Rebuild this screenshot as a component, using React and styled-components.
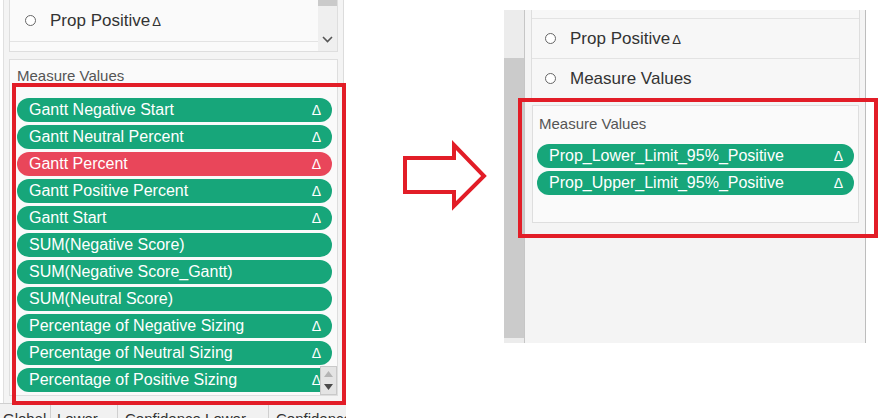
import React from "react";
import styled, { createGlobalStyle } from "styled-components";

const Global = createGlobalStyle`
  html, body { margin: 0; padding: 0; background: #fff; }
  body { width: 880px; height: 418px; overflow: hidden; font-family: "Liberation Sans", Arial, sans-serif; }
`;

const Stage = styled.div`
  display: flex;
  width: 880px;
  height: 418px;
  overflow: hidden;
  background: #fff;
`;

/* ---------- left screenshot ---------- */
const LeftShot = styled.div`
  position: relative;
  flex: none;
  width: 346px;
  height: 418px;
  display: flex;
  flex-direction: column;
  background: #fff;
`;

const LeftPanel = styled.div`
  flex: none;
  height: 403px;
  width: 329px;
  margin-left: 3px;
  padding: 0 5px;
  border-left: 1px solid #e0e0e0;
  border-right: 1px solid #dcdcdc;
  background: #f4f4f4;
  display: flex;
  flex-direction: column;
  gap: 7px;
`;

const ListBox = styled.div`
  height: 51px;
  display: flex;
  border: 1px solid #dedede;
  border-top: none;
  background: #fafafa;
`;

const ListRows = styled.div`
  flex: 1;
  display: flex;
  flex-direction: column;
`;

const Row = styled.div`
  flex: none;
  height: ${(p) => p.$h}px;
  display: flex;
  align-items: center;
  gap: 14px;
  padding-left: ${(p) => p.$indent}px;
  border-bottom: 1px solid #e3e3e3;
  font-size: 17px;
  color: #333;
  box-sizing: border-box;
`;

const Radio = styled.span`
  flex: none;
  width: 9px;
  height: 9px;
  border: 1px solid #666;
  border-radius: 50%;
  background: #fff;
`;

const SmallDelta = styled.span`
  font-size: 13px;
  margin-left: 2px;
`;

const VScroll = styled.div`
  flex: none;
  width: 19px;
  background: #efefef;
  display: flex;
  flex-direction: column;
  align-items: center;
`;

const Thumb = styled.div`
  width: 19px;
  height: 6px;
  background: #cacaca;
`;

const Chevron = styled.svg`
  margin-top: 30px;
`;

const Shelf = styled.div`
  flex: none;
  height: ${(p) => p.$h}px;
  box-sizing: border-box;
  border: 1px solid #dedede;
  background: #fafafa;
  padding-top: ${(p) => p.$pt}px;
  display: flex;
  flex-direction: column;
`;

const ShelfLabel = styled.div`
  height: 18px;
  line-height: 18px;
  font-size: 15px;
  color: #555;
  padding-left: ${(p) => p.$pl}px;
`;

const PillList = styled.div`
  position: relative;
  flex: 1;
  overflow: hidden;
  margin-top: ${(p) => p.$mt}px;
  padding-left: ${(p) => p.$pl}px;
  display: flex;
  flex-direction: column;
  gap: 3px;
`;

const Pill = styled.div`
  flex: none;
  width: ${(p) => p.$w}px;
  height: 24px;
  box-sizing: border-box;
  border-radius: 12px;
  padding: 0 11px 0 12px;
  display: flex;
  align-items: center;
  justify-content: space-between;
  background: ${(p) => (p.$red ? "#e9465a" : "#17a67a")};
  color: #fff;
  font-size: 16px;
  white-space: nowrap;
`;

const Delta = styled.span`
  font-size: 14px;
`;

const MiniScroll = styled.div`
  position: absolute;
  left: 310px;
  top: 268px;
  width: 15px;
  height: 27px;
  background: #e4e4e4;
  border: 1px solid #c9c9c9;
  display: flex;
  flex-direction: column;
  align-items: center;
  justify-content: space-around;
`;

const TabBar = styled.div`
  flex: none;
  height: 15px;
  display: flex;
  border-top: 1px solid #cfcfcf;
  background: #f1f1f1;
  overflow: hidden;
`;

const Tab = styled.div`
  flex: none;
  width: ${(p) => p.$w}px;
  border-right: 1px solid #cfcfcf;
  padding: 6px 0 0 ${(p) => p.$pl}px;
  box-sizing: border-box;
  font-size: 15px;
  line-height: 18px;
  color: #333;
  white-space: nowrap;
  overflow: hidden;
`;

const RedFrame = styled.div`
  position: absolute;
  left: ${(p) => p.$x}px;
  top: ${(p) => p.$y}px;
  width: ${(p) => p.$w}px;
  height: ${(p) => p.$h}px;
  box-sizing: border-box;
  border: 4px solid #e21d27;
  pointer-events: none;
`;

/* ---------- arrow ---------- */
const ArrowCol = styled.div`
  flex: none;
  width: 158px;
  padding: 140px 0 0 54px;
  box-sizing: border-box;
`;

/* ---------- right screenshot ---------- */
const RightShot = styled.div`
  position: relative;
  flex: none;
  margin-top: 10px;
  width: 362px;
  height: 333px;
  display: flex;
`;

const ScrollCol = styled.div`
  flex: none;
  width: 20px;
  display: flex;
  flex-direction: column;
`;

const ScrollPart = styled.div`
  flex: none;
  height: ${(p) => p.$h}px;
  background: ${(p) => p.$bg};
`;

const RightPanel = styled.div`
  flex: 1;
  border-left: 1px solid #c6c6c6;
  border-right: 1px solid #bdbdbd;
  background: #f4f4f4;
  padding: 0 5px 0 6px;
  display: flex;
  flex-direction: column;
`;

const RList = styled.div`
  display: flex;
  flex-direction: column;
  border: 1px solid #dedede;
  border-top: none;
  border-bottom: none;
  background: #f7f7f7;
`;

const RShelfWrap = styled.div`
  margin: 6px 1px 0;
`;

const left = [
  ["Gantt Negative Start", true],
  ["Gantt Neutral Percent", true],
  ["Gantt Percent", true, true],
  ["Gantt Positive Percent", true],
  ["Gantt Start", true],
  ["SUM(Negative Score)", false],
  ["SUM(Negative Score_Gantt)", false],
  ["SUM(Neutral Score)", false],
  ["Percentage of Negative Sizing", true],
  ["Percentage of Neutral Sizing", true],
  ["Percentage of Positive Sizing", true],
];

export default function App() {
  return (
    <Stage>
      <Global />
      <LeftShot>
        <LeftPanel>
          <ListBox>
            <ListRows>
              <Row $h={42} $indent={15}>
                <Radio />
                <span>
                  Prop Positive<SmallDelta>Δ</SmallDelta>
                </span>
              </Row>
            </ListRows>
            <VScroll>
              <Thumb />
              <Chevron width="11" height="7" viewBox="0 0 11 7">
                <polyline points="1,1 5.5,5.5 10,1" fill="none" stroke="#555" strokeWidth="1.6" />
              </Chevron>
            </VScroll>
          </ListBox>
          <Shelf $h={337} $pt={7}>
            <ShelfLabel $pl={7}>Measure Values</ShelfLabel>
            <PillList $mt={13} $pl={7}>
              {left.map(([name, d, red]) => (
                <Pill key={name} $w={315} $red={red}>
                  <span>{name}</span>
                  {d && <Delta>Δ</Delta>}
                </Pill>
              ))}
              <Pill $w={315} aria-hidden="true" />
              <MiniScroll>
                <svg width="9" height="6" viewBox="0 0 9 6">
                  <polygon points="0,6 4.5,0 9,6" fill="#b4b4b4" />
                </svg>
                <svg width="9" height="6" viewBox="0 0 9 6">
                  <polygon points="0,0 4.5,6 9,0" fill="#4a4a4a" />
                </svg>
              </MiniScroll>
            </PillList>
          </Shelf>
        </LeftPanel>
        <TabBar>
          <Tab $w={51} $pl={3}>Global</Tab>
          <Tab $w={67} $pl={6}>Lower</Tab>
          <Tab $w={151} $pl={7}>Confidence Lower</Tab>
          <Tab $w={120} $pl={7}>Confidence</Tab>
        </TabBar>
        <RedFrame $x={12} $y={83} $w={334} $h={322} />
      </LeftShot>

      <ArrowCol>
        <svg width="92" height="72" viewBox="0 0 92 72">
          <polygon
            points="5,18 54,18 54,5 84,36 54,66 54,52 5,52"
            fill="#fff"
            stroke="#e21d27"
            strokeWidth="4"
            strokeLinejoin="miter"
          />
        </svg>
      </ArrowCol>

      <RightShot>
        <ScrollCol>
          <ScrollPart $h={48} $bg="#ececec" />
          <ScrollPart $h={280} $bg="#cbcbcb" />
          <ScrollPart $h={5} $bg="#ececec" />
        </ScrollCol>
        <RightPanel>
          <RList>
            <Row $h={9} $indent={13} />
            <Row $h={40} $indent={13}>
              <Radio />
              <span>
                Prop Positive<SmallDelta>Δ</SmallDelta>
              </span>
            </Row>
            <Row $h={40} $indent={13}>
              <Radio />
              <span>Measure Values</span>
            </Row>
          </RList>
          <RShelfWrap>
            <Shelf $h={118} $pt={9}>
              <ShelfLabel $pl={6}>Measure Values</ShelfLabel>
              <PillList $mt={11} $pl={4}>
                <Pill $w={317}>
                  <span>Prop_Lower_Limit_95%_Positive</span>
                  <Delta>Δ</Delta>
                </Pill>
                <Pill $w={317}>
                  <span>Prop_Upper_Limit_95%_Positive</span>
                  <Delta>Δ</Delta>
                </Pill>
              </PillList>
            </Shelf>
          </RShelfWrap>
        </RightPanel>
        <RedFrame $x={14} $y={88} $w={360} $h={140} />
      </RightShot>
    </Stage>
  );
}
